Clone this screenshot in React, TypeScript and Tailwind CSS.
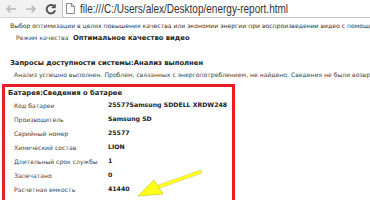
import type { ReactNode } from 'react'

const rows: [string, string][] = [
  ['Код батареи', '25577Samsung SDDELL XRDW248'],
  ['Производитель', 'Samsung SD'],
  ['Серийный номер', '25577'],
  ['Химический состав', 'LION'],
  ['Длительный срок службы', '1'],
  ['Запечатано', '0'],
  ['Расчетная емкость', '41440'],
]

function Line({ className, children }: { className?: string; children: ReactNode }) {
  return <div className={`whitespace-nowrap leading-none ${className ?? ''}`}>{children}</div>
}

export default function App() {
  return (
    <div className="relative w-[370px] h-[200px] overflow-hidden bg-white font-['DejaVu_Sans',sans-serif] text-[#222]">
      {/* Browser toolbar */}
      <div className="flex h-[18px] items-end bg-[#f2f2f2] border-b border-[#d6d6d6]">
        <div className="flex h-full items-center gap-[8px] pl-[5px] pr-[5px] text-[#b8b8b8]">
          <svg width="12" height="10" viewBox="0 0 12 10" fill="none" stroke="currentColor" strokeWidth="1.6">
            <path d="M11 5H2M5.5 1.5 2 5l3.5 3.5" />
          </svg>
          <svg width="12" height="10" viewBox="0 0 12 10" fill="none" stroke="currentColor" strokeWidth="1.6">
            <path d="M1 5h9M6.5 1.5 10 5 6.5 8.5" />
          </svg>
          <svg width="12" height="12" viewBox="0 0 12 12" fill="none" stroke="#555" strokeWidth="2">
            <path d="M9.6 4.2A4.2 4.2 0 1 0 10 7.2" />
            <path d="M10.5 1v4h-4z" fill="#555" strokeWidth="0.5" />
          </svg>
        </div>
        <div className="flex h-[19px] flex-1 items-center self-end rounded-bl-[3px] border border-r-0 border-[#c4c4c4] bg-white pl-[3px] mb-[-1px]">
          <svg width="9" height="11" viewBox="0 0 9 11" fill="none" stroke="#8a8a8a" strokeWidth="1">
            <path d="M0.5 0.5h5l3 3v7h-8z M5.5 0.5v3h3" />
          </svg>
          <span className="ml-[5px] inline-block origin-left scale-x-[0.77] font-['Liberation_Sans',sans-serif] text-[13px] text-[#333] leading-none whitespace-nowrap">
            file:///C:/Users/alex/Desktop/energy-report.html
          </span>
        </div>
      </div>

      {/* Report content */}
      <div className="text-[6.1px]">
        <Line className="mt-[5px] ml-[10px] text-[#333]">
          Выбор оптимизации в целях повышения качества или экономии энергии при воспроизведении видео с помощью
        </Line>
        <div className="mt-[6px] ml-[16px] flex items-center whitespace-nowrap leading-none">
          <span className="w-[57px] text-[#444]">Режим качества</span>
          <span className="font-bold text-[6.8px] text-[#222]">Оптимальное качество видео</span>
        </div>
        <Line className="mt-[18px] ml-[10px] font-bold text-[6.8px] text-[#222]">Запросы доступности системы:Анализ выполнен</Line>
        <Line className="mt-[5px] ml-[14px] text-[#444]">
          Анализ успешно выполнен. Проблем, связанных с энергопотреблением, не найдено. Сведения не были возвращены.
        </Line>

        <div className="ml-[2px] mt-[6px] w-[233px] h-[130px] border-[3px] border-b-0 border-[#ec1c24]">
          <Line className="mt-[3px] ml-[3px] font-bold text-[6.8px] text-[#222]">Батарея:Сведения о батарее</Line>
          <div className="mt-[2px]">
            {rows.map(([label, value]) => (
              <div key={label} className="flex h-[14px] items-center whitespace-nowrap leading-none">
                <span className="w-[103px] pl-[9px] text-[#444]">{label}</span>
                <span className="font-bold text-[6.2px] text-[#222]">{value}</span>
              </div>
            ))}
          </div>
        </div>
      </div>

      {/* Yellow arrow */}
      <svg className="absolute left-0 top-0" width="370" height="200" viewBox="0 0 370 200">
        <path d="M200 172 L158 187" stroke="#8a8a00" strokeWidth="4.5" strokeLinecap="round" opacity="0.35" />
        <path d="M200 172 L158 187" stroke="#ffff1a" strokeWidth="3" strokeLinecap="round" />
        <path d="M138 196 L154 180 L163 194 Z" fill="#ffff1a" stroke="#b5b500" strokeWidth="0.5" />
      </svg>
    </div>
  )
}
